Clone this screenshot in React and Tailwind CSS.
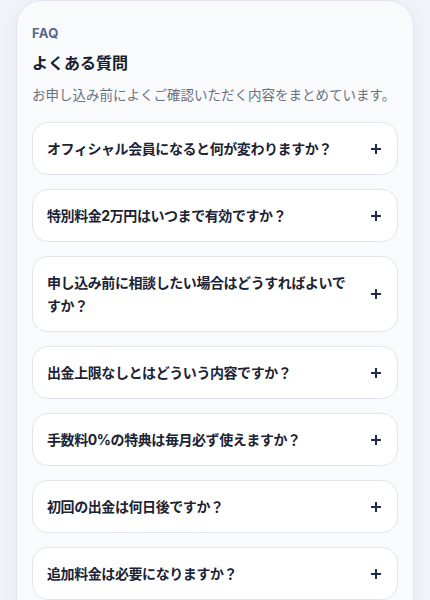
import React from 'react'

const faqs = [
  'オフィシャル会員になると何が変わりますか？',
  '特別料金2万円はいつまで有効ですか？',
  '申し込み前に相談したい場合はどうすればよいですか？',
  '出金上限なしとはどういう内容ですか？',
  '手数料0%の特典は毎月必ず使えますか？',
  '初回の出金は何日後ですか？',
  '追加料金は必要になりますか？',
]

const PlusIcon = () => (
  <svg width="10" height="10" viewBox="0 0 10 10" className="shrink-0 text-[#1f2d4d]">
    <path d="M5 0.5v9M0.5 5h9" stroke="currentColor" strokeWidth="2" strokeLinecap="round" />
  </svg>
)

const App = () => {
  return (
    <div
      className="min-h-[600px] bg-[#f1f3f8] px-4"
      style={{ fontFamily: 'Inter, "Noto Sans CJK JP", sans-serif' }}
    >
      <section className="rounded-[26px] border border-[#e3e6ee] bg-[#f9fafc] px-[15px] pt-[23px] pb-6 shadow-[0_4px_20px_rgba(30,41,80,0.05)]">
        <p className="text-[13px] font-bold leading-[18px] tracking-wide text-[#56688a]">FAQ</p>
        <h2 className="mt-[8px] text-[16px] font-bold leading-[26px] text-[#161d2c]">よくある質問</h2>
        <p className="mt-[9px] text-[13.5px] leading-[21px] text-[#6b7280]">
          お申し込み前によくご確認いただく内容をまとめています。
        </p>

        <ul className="mt-[16px] flex flex-col gap-[14px]">
          {faqs.map((q) => (
            <li key={q}>
              <button className="flex w-full items-center gap-5 rounded-2xl border border-[#e2e5ee] bg-white py-[14px] pl-[14px] pr-[16px] text-left">
                <span className="flex-1 text-[14px] font-bold leading-[23px] tracking-[-0.03em] text-[#1c2333]">{q}</span>
                <PlusIcon />
              </button>
            </li>
          ))}
        </ul>
      </section>
    </div>
  )
}

export default App
